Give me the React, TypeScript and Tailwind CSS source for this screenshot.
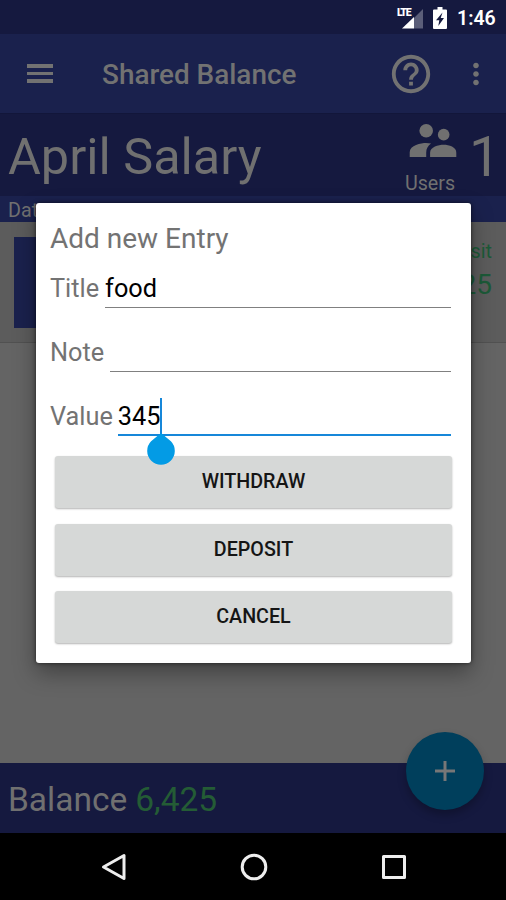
import { type ReactNode } from 'react'

function StatusBar() {
  return (
    <div className="flex h-[34px] shrink-0 items-center justify-end bg-[#15193f] pt-px pr-[11px]">
      {/* LTE signal */}
      <div className="flex h-[34px] w-[27px] items-start">
        <span className="mt-[7px] w-[13px] text-[10.500px] leading-[10px] font-black tracking-[-1.300px] text-white">LTE</span>
        <svg className="-ml-2 mt-[8px] h-5 w-[21px] shrink-0" viewBox="0 0 21 20">
          <path d="M21 0v19.500H12V9z" fill="#5b5e79" />
          <path d="M12 8v11.500H0z" fill="#fff" />
        </svg>
      </div>
      {/* charging battery */}
      <svg className="ml-[9px] h-[22px] w-[14px]" viewBox="0 0 14 22">
        <path d="M4.500 0h5v2.500H13a1 1 0 011 1V21a1 1 0 01-1 1H1a1 1 0 01-1-1V3.500a1 1 0 011-1h3.500z" fill="#fff" />
        <path d="M9.500 5.500L3 13.200h3.300L5.300 19 11 11H7.700z" fill="#15193f" />
      </svg>
      <span className="mt-[3px] ml-[10px] w-[38px] whitespace-nowrap text-[19.500px] leading-6 font-semibold text-white">1:46</span>
    </div>
  )
}

function Toolbar() {
  return (
    <div className="flex h-[80px] shrink-0 items-center border-b border-[#12163a] bg-[#1a214d] text-[#727272]">
      <div className="ml-[27px] flex w-[26px] flex-col gap-[4px]">
        <span className="h-[3.500px] bg-[#727272]" />
        <span className="h-[3.500px] bg-[#727272]" />
        <span className="h-[3.500px] bg-[#727272]" />
      </div>
      <h1 className="mt-[3px] ml-[49px] flex-1 whitespace-nowrap text-[27.900px] leading-8 font-medium">Shared Balance</h1>
      <svg className="h-[46px] w-[46px]" viewBox="0 0 24 24" fill="currentColor">
        <path d="M11 18h2v-2h-2v2zm1-16C6.480 2 2 6.480 2 12s4.480 10 10 10 10-4.480 10-10S17.520 2 12 2zm0 18c-4.410 0-8-3.590-8-8s3.590-8 8-8 8 3.590 8 8-3.590 8-8 8zm0-14c-2.210 0-4 1.790-4 4h2c0-1.100.9-2 2-2s2 .9 2 2c0 2-3 1.750-3 5h2c0-2.250 3-2.500 3-5 0-2.210-1.790-4-4-4z" />
      </svg>
      <svg className="mr-[13px] ml-[25px] h-[34px] w-[34px]" viewBox="0 0 24 24" fill="currentColor">
        <path d="M12 8c1.100 0 2-.9 2-2s-.9-2-2-2-2 .9-2 2 .9 2 2 2zm0 2c-1.100 0-2 .9-2 2s.9 2 2 2 2-.9 2-2-.9-2-2-2zm0 6c-1.100 0-2 .9-2 2s.9 2 2 2 2-.9 2-2-.9-2-2-2z" />
      </svg>
    </div>
  )
}

function AccountHeader() {
  return (
    <>
      <div className="flex h-[82px] shrink-0 bg-[#15193f] pl-2 text-[#707070]">
        <h2 className="mt-[13px] flex-1 whitespace-nowrap text-[50.400px] leading-[60px]">April Salary</h2>
        <div className="flex w-[58px] flex-col items-center">
          <svg className="mt-[10px] ml-[6px] h-[34px] w-[48px]" viewBox="0 0 48 34" fill="currentColor">
            <circle cx="17" cy="7" r="7" />
            <circle cx="35" cy="11" r="6" />
            <path d="M22 20.200c-1.700-.4-3.400-.6-5-.6-5.300 0-17 2.500-17 9.400v5h17v-4.500c0-3.900 1.800-7 5-9.300z" />
            <path d="M35 21.500c-5.500 0-14 2.300-14 8V34h27v-4.500c0-5.700-7.500-8-13-8z" />
          </svg>
          <span className="mt-[15px] text-[19.700px] leading-6">Users</span>
        </div>
        <span className="mt-[13px] mr-[5px] ml-[10px] w-8 text-[56px] leading-[60px]">1</span>
      </div>
      <div className="h-[26px] shrink-0 bg-[#1a214d] pl-2 text-[19.700px] leading-[30px] text-[#707070]">Date</div>
    </>
  )
}

function EntryRow() {
  return (
    <div className="flex h-[121px] shrink-0 justify-between border-b border-[#515151] bg-[#5c5c5c] pt-[15px] pr-[14px] pl-[14px]">
      <div className="h-[91px] w-[91px] bg-[#1a214d]" />
      <div className="flex flex-col items-end text-[#1c5a38]">
        <span className="mt-[3px] text-[19.700px] leading-6">Deposit</span>
        <span className="mt-[3px] text-[28px] leading-9">6,425</span>
      </div>
    </div>
  )
}

function Field({ label, className, children }: { label: string; className: string; children?: ReactNode }) {
  return (
    <label className="flex h-[64px] text-[25.300px] leading-[32px] text-[#737373]">
      <span className="pt-[17px] whitespace-nowrap">{label}</span>
      <div className={`mt-[17px] h-[35px] flex-1 whitespace-nowrap text-black ${className}`}>{children}</div>
    </label>
  )
}

function DialogButton({ children }: { children: ReactNode }) {
  return (
    <button className="h-[52px] w-full rounded-[3px] bg-[#d6d8d7] text-[19.700px] leading-6 font-medium text-[#151515] shadow-[0_1px_2px_rgba(0,0,0,0.3)]">
      {children}
    </button>
  )
}

function EntryDialog() {
  return (
    <div className="absolute top-[203px] left-[36px] h-[460px] w-[435px] rounded-[3px] bg-white shadow-[0_10px_22px_rgba(0,0,0,0.35),0_0_4px_rgba(0,0,0,0.6)]">
      <h3 className="mt-[19px] ml-[14px] text-[28px] leading-[34px] text-[#737373]">Add new Entry</h3>
      <div className="pr-5 pl-[14px]">
        <Field label="Title" className="ml-[6px] border-b border-[#808080]">food</Field>
        <Field label="Note" className="ml-[6px] border-b border-[#808080]" />
        <Field label="Value" className="ml-[5px] border-b-2 border-[#1687d9]">
          <span className="relative inline-block">
            345
            <span className="absolute -right-[2px] -top-[3px] h-[36px] w-[2px] bg-[#1687d9]" />
            {/* text selection handle */}
            <svg className="absolute top-[32px] -right-[15px] h-[32px] w-[28px]" viewBox="0 0 28 32">
              <path d="M14 0l9.900 8.300a13.800 13.800 0 11-19.800 0z" fill="#039be5" />
            </svg>
          </span>
        </Field>
      </div>
      <div className="mt-[8px] flex flex-col gap-[15.500px] pr-[19px] pl-[19px]">
        <DialogButton>WITHDRAW</DialogButton>
        <DialogButton>DEPOSIT</DialogButton>
        <DialogButton>CANCEL</DialogButton>
      </div>
    </div>
  )
}

function NavBar() {
  return (
    <div className="flex h-[67px] shrink-0 items-center bg-black">
      <svg className="ml-[101px] h-[28px] w-[26px]" viewBox="0 0 26 28" fill="none" stroke="#eee" strokeWidth="3" strokeLinejoin="round">
        <path d="M23 2.500v23L2.500 14z" />
      </svg>
      <svg className="ml-[112.500px] h-[28px] w-[28px]" viewBox="0 0 28 28" fill="none" stroke="#eee" strokeWidth="3">
        <circle cx="14" cy="14" r="11.800" />
      </svg>
      <svg className="ml-[113.500px] h-[26px] w-[26px]" viewBox="0 0 26 26" fill="none" stroke="#eee" strokeWidth="3" strokeLinejoin="round">
        <path d="M2.500 2.500h21v21h-21z" />
      </svg>
    </div>
  )
}

export default function App() {
  return (
    <div className="relative flex h-[900px] w-[506px] flex-col overflow-hidden bg-[#646464] font-['Roboto',sans-serif]">
      <StatusBar />
      <Toolbar />
      <AccountHeader />
      <EntryRow />
      <div className="flex-1" />
      <div className="flex h-[70px] shrink-0 items-center gap-2 bg-[#15193f] pt-[3px] pl-2 text-[33.500px] leading-10 text-[#707070]">
        <span>Balance</span>
        <span className="text-[#245c35]">6,425</span>
      </div>
      <NavBar />

      <button className="absolute top-[732px] left-[406px] flex h-[78px] w-[78px] items-center justify-center rounded-full bg-[#003f5c] shadow-[0_5px_9px_rgba(0,0,0,0.25)]">
        <svg className="h-5 w-5" viewBox="0 0 20 20" fill="#777">
          <path d="M8.500 0h3v8.500H20v3h-8.500V20h-3v-8.500H0v-3h8.500z" />
        </svg>
      </button>
      <EntryDialog />
    </div>
  )
}
